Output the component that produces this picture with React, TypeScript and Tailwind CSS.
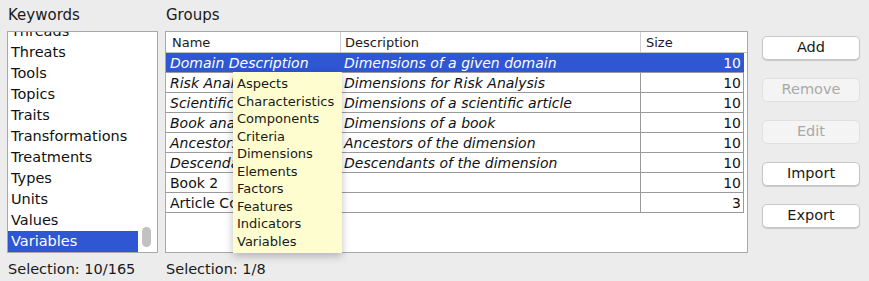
import React from "react";

const keywords = [
  "Threads",
  "Threats",
  "Tools",
  "Topics",
  "Traits",
  "Transformations",
  "Treatments",
  "Types",
  "Units",
  "Values",
  "Variables",
];

type Row = { name: string; desc: string; size: number; italic: boolean };

const rows: Row[] = [
  { name: "Domain Description", desc: "Dimensions of a given domain", size: 10, italic: true },
  { name: "Risk Analysis", desc: "Dimensions for Risk Analysis", size: 10, italic: true },
  { name: "Scientific article", desc: "Dimensions of a scientific article", size: 10, italic: true },
  { name: "Book analysis", desc: "Dimensions of a book", size: 10, italic: true },
  { name: "Ancestors", desc: "Ancestors of the dimension", size: 10, italic: true },
  { name: "Descendants", desc: "Descendants of the dimension", size: 10, italic: true },
  { name: "Book 2", desc: "", size: 10, italic: false },
  { name: "Article Collection", desc: "", size: 3, italic: false },
];

const tipItems = [
  "Aspects",
  "Characteristics",
  "Components",
  "Criteria",
  "Dimensions",
  "Elements",
  "Factors",
  "Features",
  "Indicators",
  "Variables",
];

const buttons = [
  { label: "Add", enabled: true },
  { label: "Remove", enabled: false },
  { label: "Edit", enabled: false },
  { label: "Import", enabled: true },
  { label: "Export", enabled: true },
];

function KeywordList() {
  return (
    <div className="flex w-[151px] flex-col">
      <div className="h-[31px] pl-[1px] pt-[6px] text-[15px] leading-[18px] text-[#1a1a1a]">Keywords</div>
      <div className="flex h-[222px] border border-[#a8a8a8] bg-white">
        <div className="w-[130px] overflow-hidden">
          <div className="-mt-[11px] flex flex-col">
            {keywords.map((k, i) => {
              const sel = i === keywords.length - 1;
              return (
                <div
                  key={k}
                  className={`h-[21px] pl-[3px] text-[14.5px] leading-[21px] ${
                    sel ? "bg-[#2f56d3] text-white" : "text-[#111]"
                  }`}
                >
                  {k}
                </div>
              );
            })}
          </div>
        </div>
        <div className="flex flex-1 flex-col justify-end pb-[5px] pl-[4px]">
          <div className="h-[20px] w-[9px] rounded-full bg-[#c2c2c2]" />
        </div>
      </div>
      <div className="pl-[1px] pt-[7px] text-[14.5px] leading-[18px] text-[#1a1a1a]">Selection: 10/165</div>
    </div>
  );
}

function GroupsTable() {
  return (
    <div className="flex w-[583px] flex-col">
      <div className="h-[31px] pl-[1px] pt-[6px] text-[15px] leading-[18px] text-[#1a1a1a]">Groups</div>
      <div className="relative h-[222px] border border-[#a8a8a8] bg-white">
        <div className="flex h-[21px] border-b border-[#c4c4c4] text-[13px] leading-[21px] text-[#1a1a1a]">
          <div className="w-[174px] pl-[6px]">Name</div>
          <div className="w-[300px] border-l border-[#d0d0d0] pl-[4px]">Description</div>
          <div className="w-[104px] border-l border-[#d0d0d0] pl-[5px]">Size</div>
        </div>
        {rows.map((r, i) => {
          const sel = i === 0;
          const txt = sel ? "text-white" : "text-[#111]";
          const line = sel ? "border-[#2f56d3]" : "border-[#9a9a9a]";
          return (
            <div
              key={r.name}
              className={`flex h-[20px] w-[578px] border-b border-[#9a9a9a] text-[14px] leading-[20px] ${
                sel ? "bg-[#2f56d3]" : ""
              } ${txt}`}
            >
              <div className={`w-[174px] overflow-hidden whitespace-nowrap pl-[4px] ${r.italic ? "italic" : ""}`}>
                {r.name}
              </div>
              <div
                className={`w-[300px] overflow-hidden whitespace-nowrap border-l ${line} pl-[3px] ${
                  r.italic ? "italic" : ""
                }`}
              >
                {r.desc}
              </div>
              <div className={`w-[104px] border-l border-r ${line} pr-[2px] text-right`}>{r.size}</div>
            </div>
          );
        })}
        <div className="absolute left-[67px] top-[40px] w-[109px] bg-[#fefdd0] py-[3px] pl-[4px] shadow-[0_3px_8px_rgba(0,0,0,0.25)]">
          {tipItems.map((t) => (
            <div key={t} className="h-[17.5px] text-[13px] leading-[17.5px] text-[#1a1a1a]">
              {t}
            </div>
          ))}
        </div>
      </div>
      <div className="pl-[1px] pt-[7px] text-[14.5px] leading-[18px] text-[#1a1a1a]">Selection: 1/8</div>
    </div>
  );
}

export default function App() {
  return (
    <div
      className="flex h-[281px] w-[869px] gap-[7px] bg-[#ececec] pl-[7px]"
      style={{ fontFamily: '"DejaVu Sans", "Lucida Grande", sans-serif' }}
    >
      <KeywordList />
      <GroupsTable />
      <div className="flex w-[105px] flex-col gap-[18px] pl-[7px] pt-[36px]">
        {buttons.map((b) => (
          <div
            key={b.label}
            className={`flex h-[24px] items-center justify-center rounded-[5px] border text-[14.5px] ${
              b.enabled
                ? "border-[#c6c6c6] bg-white text-[#1a1a1a] shadow-[0_1px_1px_rgba(0,0,0,0.15)]"
                : "border-[#e0e0e0] bg-[#f4f4f4] text-[#a9a9a9]"
            }`}
          >
            {b.label}
          </div>
        ))}
      </div>
    </div>
  );
}
